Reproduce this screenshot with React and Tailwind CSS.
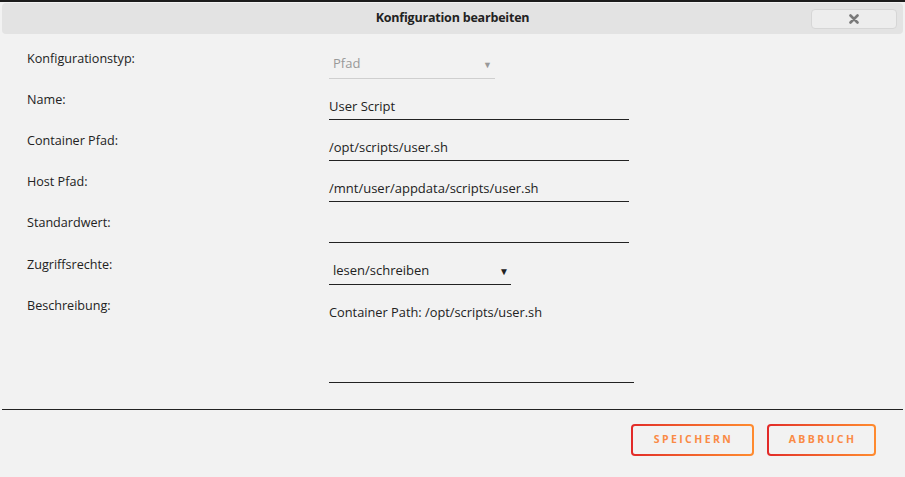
import { useState } from "react";

const FONT = { fontFamily: '"Open Sans", "Liberation Sans", sans-serif' };

function Row({ label, tall, children }) {
  return (
    <div className={`flex ${tall ? "h-[42px]" : "h-[41px]"}`}>
      <div className="w-[302px] pt-[8px] text-[12.6px] text-[#222]">{label}</div>
      <div className="flex-1">{children}</div>
    </div>
  );
}

function TextField({ value }) {
  return (
    <div className="w-[300px] border-b border-[#222] pt-[14px] h-[37px] text-[13px] text-[#222] leading-[18px]">
      {value}
    </div>
  );
}

export default function App() {
  const [access] = useState("lesen/schreiben");

  return (
    <div className="h-[477px] w-[905px] bg-[#f2f2f2] text-[#222] flex flex-col" style={FONT}>
      <div className="h-[2px] bg-[#1c1c1c]" />

      {/* title bar */}
      <div className="mx-[2px] mt-[1px] h-[31px] rounded-[4px] bg-[#e3e3e3] flex items-center relative">
        <div className="flex-1 text-center text-[12.5px] font-bold tracking-[-0.2px] text-[#222]">
          Konfiguration bearbeiten
        </div>
        <button className="absolute right-[6px] top-[6px] h-[20px] w-[86px] rounded-[4px] border border-[#d6d6d6] bg-[#ededed] flex items-center justify-center">
          <svg width="10" height="10" viewBox="0 0 10 10">
            <path d="M1.5 1.5 L8.5 8.5 M8.5 1.5 L1.5 8.5" stroke="#7a7a7a" strokeWidth="2.6" strokeLinecap="round" />
          </svg>
        </button>
      </div>

      {/* form */}
      <div className="pl-[27px] pt-[8px]">
        <Row label="Konfigurationstyp:">
          <div className="w-[166px] border-b border-[#cfcfcf] h-[37px] pt-[12px] flex items-start justify-between pl-[4px] pr-[3px] text-[13px] text-[#999] leading-[18px]">
            <span>Pfad</span>
            <span className="text-[9px] text-[#999] pt-[2px]">▼</span>
          </div>
        </Row>
        <Row label="Name:">
          <TextField value="User Script" />
        </Row>
        <Row label="Container Pfad:">
          <TextField value="/opt/scripts/user.sh" />
        </Row>
        <Row label="Host Pfad:">
          <TextField value="/mnt/user/appdata/scripts/user.sh" />
        </Row>
        <Row label="Standardwert:" tall>
          <TextField value="" />
        </Row>
        <Row label="Zugriffsrechte:">
          <div className="w-[182px] border-b border-[#222] h-[37px] pt-[13px] flex items-start justify-between pl-[4px] pr-[2px] text-[13px] text-[#222] leading-[18px]">
            <span>{access}</span>
            <span className="text-[10px] pt-[1px]">▼</span>
          </div>
        </Row>
        <div className="flex">
          <div className="w-[302px] pt-[8px] text-[12.6px] text-[#222]">Beschreibung:</div>
          <div className="w-[305px] h-[94px] border-b border-[#222] pt-[14px] text-[12.8px] leading-[18px]">
            Container Path: /opt/scripts/user.sh
          </div>
        </div>
      </div>

      <div className="mt-[26px] mx-[2px] h-[1px] bg-[#222]" />

      {/* buttons */}
      <div className="flex justify-end gap-[13px] pr-[29px] pt-[14px]">
        {[
          ["SPEICHERN", "w-[123px]"],
          ["ABBRUCH", "w-[109px]"],
        ].map(([t, w]) => (
          <div
            key={t}
            className={`${w} rounded-[4px] bg-gradient-to-r from-[#e22828] to-[#ff8b2f] p-[2px]`}
          >
            <div className="h-[28px] rounded-[2px] bg-[#f2f2f2] flex items-center justify-center pl-[2px] text-[10.5px] font-bold tracking-[2.4px] text-[#fa8a45]">
              {t}
            </div>
          </div>
        ))}
      </div>
    </div>
  );
}
